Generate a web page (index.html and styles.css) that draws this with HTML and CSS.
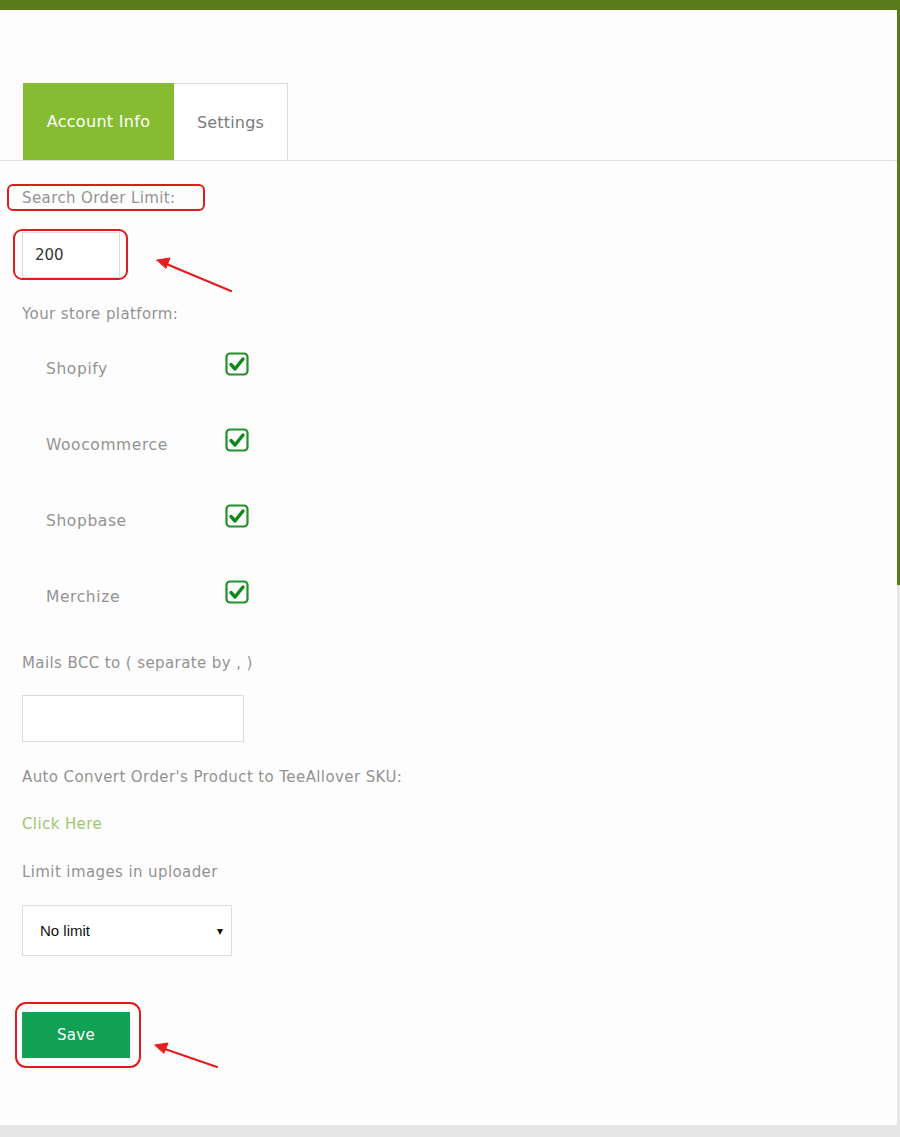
FILE: index.html
```html
<!DOCTYPE html>
<html lang="en">
<head>
<meta charset="UTF-8">
<meta name="viewport" content="width=device-width, initial-scale=1.0">
<title>Account Info</title>
<link rel="stylesheet" href="styles.css">
</head>
<body>

<div class="topbar"></div>
<div class="wrap">
  <div class="panel">
    <div class="tabs">
      <div class="tab active">Account Info</div>
      <div class="tab">Settings</div>
    </div>

    <div class="form">
      <div class="mark mark-label">
        <span class="label">Search Order Limit:</span>
      </div>

      <div class="field-limit">
        <div class="mark mark-input">
          <input class="input input-small" type="text" value="200">
        </div>
      </div>

      <div class="label top-gap">Your store platform:</div>

      <div class="platforms">
        <div class="platform">
          <span class="platform-name">Shopify</span>
          <span class="check"><svg viewBox="0 0 24 24" width="24" height="24"><rect x="1.5" y="1.5" width="21" height="21" rx="3.5" fill="none" stroke="#24902a" stroke-width="2.2"/><path d="M6 12.5l4 4.5 8-10" fill="none" stroke="#0f8a1a" stroke-width="3.4" stroke-linecap="round" stroke-linejoin="round"/></svg></span>
        </div>
        <div class="platform">
          <span class="platform-name">Woocommerce</span>
          <span class="check"><svg viewBox="0 0 24 24" width="24" height="24"><rect x="1.5" y="1.5" width="21" height="21" rx="3.5" fill="none" stroke="#24902a" stroke-width="2.2"/><path d="M6 12.5l4 4.5 8-10" fill="none" stroke="#0f8a1a" stroke-width="3.4" stroke-linecap="round" stroke-linejoin="round"/></svg></span>
        </div>
        <div class="platform">
          <span class="platform-name">Shopbase</span>
          <span class="check"><svg viewBox="0 0 24 24" width="24" height="24"><rect x="1.5" y="1.5" width="21" height="21" rx="3.5" fill="none" stroke="#24902a" stroke-width="2.2"/><path d="M6 12.5l4 4.5 8-10" fill="none" stroke="#0f8a1a" stroke-width="3.4" stroke-linecap="round" stroke-linejoin="round"/></svg></span>
        </div>
        <div class="platform">
          <span class="platform-name">Merchize</span>
          <span class="check"><svg viewBox="0 0 24 24" width="24" height="24"><rect x="1.5" y="1.5" width="21" height="21" rx="3.5" fill="none" stroke="#24902a" stroke-width="2.2"/><path d="M6 12.5l4 4.5 8-10" fill="none" stroke="#0f8a1a" stroke-width="3.4" stroke-linecap="round" stroke-linejoin="round"/></svg></span>
        </div>
      </div>

      <div class="label gap-mails">Mails BCC to ( separate by , )</div>
      <input class="input input-wide" type="text">

      <div class="label gap-auto">Auto Convert Order's Product to TeeAllover SKU:</div>
      <a class="link" href="#">Click Here</a>

      <div class="label gap-limit">Limit images in uploader</div>
      <div class="select">
        <span>No limit</span>
        <span class="caret">&#9662;</span>
      </div>

      <div class="mark mark-save">
        <button class="save">Save</button>
      </div>
    </div>

    <svg class="arrows" width="897" height="1115" viewBox="0 0 897 1115">
      <g stroke="#e41d1d" stroke-width="2.2" fill="#e41d1d" stroke-linecap="round">
        <line x1="231" y1="281" x2="164" y2="253"/>
        <path d="M157 250 L170 248 L166 258 Z" stroke-width="1"/>
        <line x1="217" y1="1057" x2="162" y2="1038"/>
        <path d="M155 1035 L168 1033 L164 1043 Z" stroke-width="1"/>
      </g>
    </svg>
  </div>
  <div class="edge"><div class="edge-green"></div></div>
</div>

</body>
</html>
```

FILE: styles.css
```css
body {
  margin: 0;
  background: #e6e6e6;
  font-family: "DejaVu Sans", Arial, sans-serif;
  color: #8a8a8a;
}

.topbar {
  height: 10px;
  background: #5b7a1c;
}

.wrap {
  display: flex;
}

.panel {
  position: relative;
  width: 897px;
  height: 1115px;
  background: #fdfdfd;
}

.edge {
  width: 3px;
  background: #e6e6e6;
}

.edge-green {
  height: 575px;
  background: #5b7a1c;
}

.tabs {
  display: flex;
  margin-top: 73px;
  padding-left: 23px;
  border-bottom: 1px solid #dedede;
}

.tab {
  display: flex;
  align-items: center;
  justify-content: center;
  height: 76px;
  width: 113px;
  font-size: 16px;
  letter-spacing: 0.2px;
  color: #7b7b7b;
  background: #fff;
  border: 1px solid #dcdcdc;
  border-bottom: none;
  border-left: none;
}

.tab.active {
  width: 151px;
  height: 77px;
  letter-spacing: 0.3px;
  color: #fff;
  background: #86bc32;
  border: none;
}

.form {
  padding-left: 22px;
}

.label {
  font-size: 15px;
  line-height: 20px;
  letter-spacing: 0.4px;
  color: #939393;
}

.mark {
  display: inline-block;
  border: 2px solid #e21c1c;
}

.mark-label {
  margin-top: 23px;
  margin-left: -15px;
  padding: 2px 27px 1px 13px;
  border-radius: 6px;
}

.field-limit {
  margin-top: 18px;
}

.mark-input {
  margin-left: -9px;
  padding: 1px 6px 0 7px;
  border-radius: 9px;
}

.input {
  display: block;
  box-sizing: border-box;
  border: 1px solid #dcdcdc;
  background: #fff;
  font-family: "DejaVu Sans", Arial, sans-serif;
  font-size: 15px;
  color: #333;
  outline: none;
}

.input-small {
  width: 98px;
  height: 46px;
  padding-left: 12px;
}

.input-wide {
  width: 222px;
  height: 47px;
  margin-top: 22px;
}

.top-gap {
  margin-top: 24px;
}

.platforms {
  margin-top: 7px;
}

.platform {
  display: flex;
  align-items: center;
  height: 76px;
}

.platform-name {
  width: 179px;
  padding-left: 24px;
  font-size: 15.5px;
  letter-spacing: 0.6px;
  color: #939393;
}

.check {
  display: flex;
  margin-bottom: 10px;
}

.gap-mails {
  margin-top: 18px;
}

.gap-auto {
  margin-top: 25px;
}

.link {
  display: block;
  margin-top: 27px;
  font-size: 15px;
  line-height: 20px;
  letter-spacing: 0.4px;
  color: #9dc670;
  text-decoration: none;
}

.gap-limit {
  margin-top: 28px;
}

.select {
  display: flex;
  align-items: center;
  justify-content: space-between;
  box-sizing: border-box;
  width: 210px;
  height: 51px;
  margin-top: 23px;
  padding: 0 8px 0 17px;
  border: 1px solid #dcdcdc;
  background: #fff;
  font-family: "Liberation Sans", Arial, sans-serif;
  font-size: 15px;
  color: #111;
}

.caret {
  font-size: 12px;
}

.mark-save {
  margin-top: 46px;
  margin-left: -7px;
  padding: 8px 9px 8px 5px;
  border-radius: 11px;
}

.save {
  display: block;
  width: 108px;
  height: 46px;
  border: none;
  background: #12a055;
  color: #fff;
  font-family: "DejaVu Sans", Arial, sans-serif;
  font-size: 15px;
  letter-spacing: 0.3px;
  cursor: pointer;
}

.arrows {
  position: absolute;
  left: 0;
  top: 0;
  pointer-events: none;
}
```
